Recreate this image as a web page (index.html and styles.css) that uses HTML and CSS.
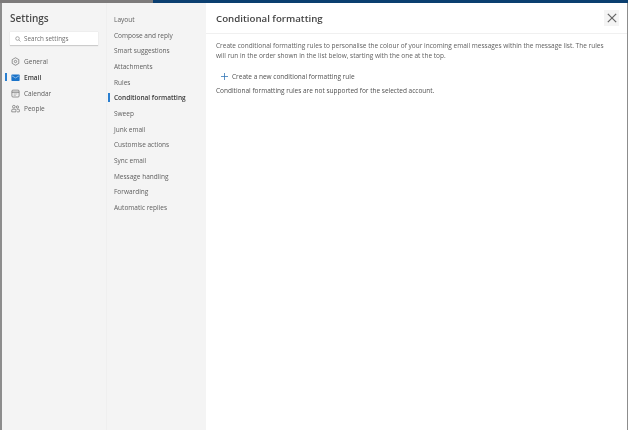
FILE: index.html
```html
<!DOCTYPE html>
<html lang="en">
<head>
<meta charset="utf-8">
<title>Settings</title>
<link rel="stylesheet" href="styles.css">
</head>
<body>
<div class="backdrop">
  <div class="backdrop-gray"></div>
  <div class="backdrop-blue"></div>
</div>
<div class="dialog">
  <aside class="nav">
    <h1 class="nav-title">Settings</h1>
    <div class="search">
      <svg class="search-icon" viewBox="0 0 10 10" width="6" height="6"><circle cx="4.2" cy="4.2" r="3" fill="none" stroke="#777" stroke-width="1"/><path d="M6.4 6.4 9.2 9.2" stroke="#777" stroke-width="1"/></svg>
      <span>Search settings</span>
    </div>
    <ul class="nav-list">
      <li class="nav-item">
        <svg class="nav-icon" viewBox="0 0 12 12"><path d="M6 1 10.4 3.5V8.5L6 11 1.6 8.5V3.5Z" fill="none" stroke="#666" stroke-width=".9"/><circle cx="6" cy="6" r="1.6" fill="none" stroke="#666" stroke-width=".9"/></svg>
        <span>General</span>
      </li>
      <li class="nav-item is-active">
        <svg class="nav-icon" viewBox="0 0 12 12"><rect x=".5" y="2" width="11" height="8.5" rx="1" fill="#1a73c9"/><path d="M1 3.6 6 6.6 11 3.6" fill="none" stroke="#d5e6f7" stroke-width=".8"/></svg>
        <span>Email</span>
      </li>
      <li class="nav-item">
        <svg class="nav-icon" viewBox="0 0 12 12"><rect x="1.2" y="1.5" width="9.6" height="9.2" rx="1.4" fill="none" stroke="#666" stroke-width=".9"/><path d="M1.2 4.2H10.8" stroke="#666" stroke-width="1.2"/><path d="M3.5 6.6H8.5M3.5 8.4H6.5" stroke="#888" stroke-width=".7"/></svg>
        <span>Calendar</span>
      </li>
      <li class="nav-item">
        <svg class="nav-icon" viewBox="0 0 12 12"><circle cx="3.8" cy="3.6" r="1.8" fill="none" stroke="#666" stroke-width=".9"/><circle cx="8.6" cy="4" r="1.5" fill="none" stroke="#666" stroke-width=".9"/><path d="M1 10.5V8.2Q1 7 2.2 7H5.4Q6.6 7 6.6 8.2V10.5Z" fill="none" stroke="#666" stroke-width=".9"/><path d="M7.6 7H10Q11.2 7 11.2 8.2V10Q11.2 10.5 10.4 10.5H8" fill="none" stroke="#666" stroke-width=".9"/></svg>
        <span>People</span>
      </li>
    </ul>
  </aside>
  <nav class="subnav">
    <a class="subnav-item">Layout</a>
    <a class="subnav-item">Compose and reply</a>
    <a class="subnav-item">Smart suggestions</a>
    <a class="subnav-item">Attachments</a>
    <a class="subnav-item">Rules</a>
    <a class="subnav-item is-active">Conditional formatting</a>
    <a class="subnav-item">Sweep</a>
    <a class="subnav-item">Junk email</a>
    <a class="subnav-item">Customise actions</a>
    <a class="subnav-item">Sync email</a>
    <a class="subnav-item">Message handling</a>
    <a class="subnav-item">Forwarding</a>
    <a class="subnav-item">Automatic replies</a>
  </nav>
  <main class="content">
    <header class="content-header">
      <h2 class="content-title">Conditional formatting</h2>
      <button class="close" aria-label="Close">
        <svg viewBox="0 0 12 12" width="10" height="10"><path d="M1 1 11 11M11 1 1 11" stroke="#666" stroke-width="1.5"/></svg>
      </button>
    </header>
    <div class="content-body">
      <p class="intro">Create conditional formatting rules to personalise the colour of your incoming email messages within the message list. The rules will run in the order shown in the list below, starting with the one at the top.</p>
      <div class="create">
        <svg viewBox="0 0 10 10" width="7" height="7"><path d="M5 0V10M0 5H10" stroke="#2f74b5" stroke-width="1.1"/></svg>
        <span>Create a new conditional formatting rule</span>
      </div>
      <p class="note">Conditional formatting rules are not supported for the selected account.</p>
    </div>
  </main>
</div>
</body>
</html>
```
FILE: styles.css
```css
* { box-sizing: border-box; }
html, body { margin: 0; height: 100%; overflow: hidden; }
body {
  width: 628px;
  height: 430px;
  display: flex;
  flex-direction: column;
  background: #8d8d8d;
  font-family: "Open Sans", "Liberation Sans", sans-serif;
  color: #555;
}
.backdrop { display: flex; height: 3px; flex: none; }
.backdrop-gray { width: 153px; background: #7d7b7b; }
.backdrop-blue { flex: 1; background: #0b3f70; }
.dialog {
  flex: 1;
  display: flex;
  margin: 0 1px 0 2px;
  background: #fff;
  min-height: 0;
  filter: blur(0.3px);
}
.nav {
  width: 105px;
  flex: none;
  background: #f4f4f4;
  border-right: 1px solid #efefef;
  padding: 8px 0 0 8px;
}
.nav-title {
  margin: 0;
  font-size: 10px;
  line-height: 15px;
  font-weight: 600;
  color: #4a4a4a;
}
.search {
  margin-top: 6px;
  width: 88px;
  height: 14px;
  background: #fff;
  border-bottom: 1px solid #ccc;
  box-shadow: 0 0 1px #ccc;
  display: flex;
  align-items: center;
  gap: 3px;
  padding-left: 5px;
  font-size: 6.3px;
  color: #707070;
}
.nav-list { list-style: none; margin: 8px 0 0; padding: 0; }
.nav-item {
  position: relative;
  height: 15.67px;
  display: flex;
  align-items: center;
  gap: 4px;
  font-size: 6.5px;
  color: #5e5e5e;
  padding-left: 1px;
}
.nav-icon { width: 9px; height: 9px; flex: none; }
.nav-item.is-active { font-weight: 600; color: #3a3a3a; }
.nav-item.is-active::before,
.subnav-item.is-active::before {
  content: "";
  position: absolute;
  top: 3px;
  bottom: 4px;
  width: 2px;
  background: #2a7fd0;
}
.nav-item.is-active::before { left: -5px; }
.subnav {
  width: 99px;
  flex: none;
  background: #f4f4f4;
  padding: 9px 0 0 7px;
  display: flex;
  flex-direction: column;
}
.subnav-item {
  position: relative;
  height: 15.67px;
  line-height: 15px;
  font-size: 6.5px;
  color: #5e5e5e;
  white-space: nowrap;
}
.subnav-item.is-active { font-weight: 600; color: #3a3a3a; }
.subnav-item.is-active::before { left: -6px; }
.content { flex: 1; display: flex; flex-direction: column; min-width: 0; }
.content-header {
  height: 31px;
  flex: none;
  display: flex;
  align-items: center;
  justify-content: space-between;
  padding: 0 8px 0 10px;
  border-bottom: 1px solid #f0f0f0;
}
.content-title { margin: 0; font-size: 9.7px; font-weight: 600; color: #444; }
.close {
  width: 15px;
  height: 16px;
  padding: 0;
  border: 0;
  background: #f4f4f4;
  display: flex;
  align-items: center;
  justify-content: center;
}
.content-body { padding: 7px 15px 0 10px; font-size: 6.5px; color: #606060; }
.intro { margin: 0; line-height: 10px; }
.create {
  display: flex;
  align-items: center;
  gap: 4px;
  margin-top: 8px;
  padding-left: 5px;
  height: 14px;
  color: #505050;
}
.note { margin: 3px 0 0; line-height: 10px; color: #505050; }
```
